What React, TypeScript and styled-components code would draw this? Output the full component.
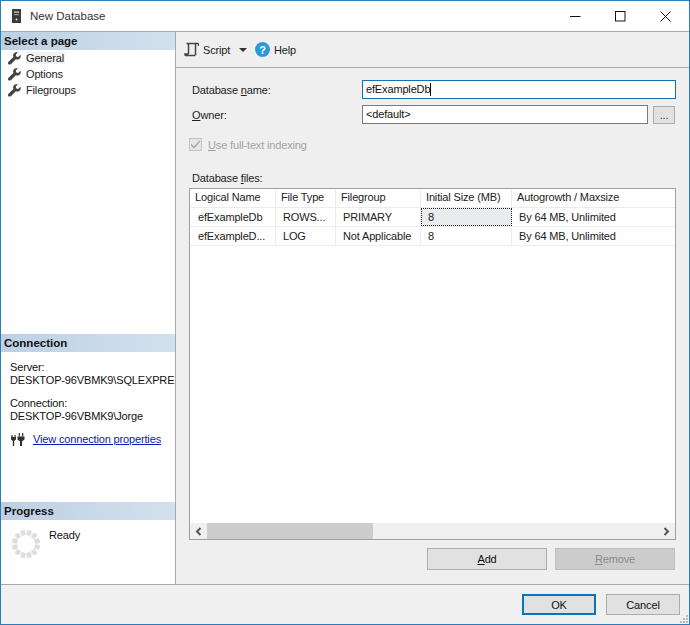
import React from "react";
import styled, { createGlobalStyle } from "styled-components";

const Global = createGlobalStyle`
  html, body { margin: 0; padding: 0; background: #fff; }
  body { font-family: "Liberation Sans", Arial, sans-serif; font-size: 11px; letter-spacing: -0.15px; color: #111; }
  * { box-sizing: border-box; }
  u { text-underline-offset: 1px; }
  button { letter-spacing: inherit; }
`;

const Win = styled.div`
  width: 690px; height: 625px; display: flex; flex-direction: column;
  border: 1px solid #2b7cba; background: #fff; overflow: hidden;
`;
const TitleBar = styled.div`
  height: 31px; flex: none; display: flex; align-items: center; padding: 0 1px 0 11px; background: #fff;
  border-bottom: 1px solid #a9a9a9;
`;
const TitleText = styled.span`
  margin-left: 9px; font-size: 11.5px; letter-spacing: 0; color: #333; flex: 1;
`;
const WinBtn = styled.button`
  width: 45px; height: 30px; padding: 0; border: 0; background: none; display: flex; align-items: center; justify-content: center;
`;
const Main = styled.div`
  flex: 1; display: flex; min-height: 0;
`;
const Side = styled.div`
  width: 175px; flex: none; display: flex; flex-direction: column; background: #fff; border-right: 1px solid #a9a9a9;
`;
const SideSection = styled.section<{ $h: number }>`
  height: ${p => p.$h}px; flex: none; display: flex; flex-direction: column;
`;
const SideHeader = styled.div`
  height: 18px; flex: none; padding-left: 3px; font-weight: bold; font-size: 11.5px; letter-spacing: 0; line-height: 18px; color: #111;
  background: linear-gradient(90deg, #bdd0e2 0%, #d3e1ee 100%);
`;
const PageList = styled.div`
  display: flex; flex-direction: column;
`;
const PageRow = styled.div`
  height: 16px; display: flex; align-items: center; padding-left: 7px; gap: 5px; color: #222;
`;
const PageLabel = styled.span<{ $active?: boolean }>`
  padding-right: 1px; background: ${p => (p.$active ? "#f2f2f2" : "transparent")};
`;
const ConnBody = styled.div`
  padding: 9px 0 0 9px; display: flex; flex-direction: column; line-height: 13px; color: #111; white-space: nowrap; overflow: hidden;
`;
const ConnGroup = styled.div`
  margin-bottom: 10px;
  & > div { height: 13px; }
`;
const LinkRow = styled.div`
  display: flex; align-items: center; gap: 8px; padding-left: 1px;
`;
const Link = styled.a`
  color: #0a18b4; text-decoration: underline;
`;
const ProgressBody = styled.div`
  display: flex; padding: 9px 0 0 10px; gap: 8px;
`;
const SpinnerIcon = styled.svg`
  flex: none;
`;
const Ready = styled.span`
  color: #111;
`;
const Content = styled.div`
  flex: 1; min-width: 0; display: flex; flex-direction: column; background: #efefef;
`;
const ToolBar = styled.div`
  height: 36px; flex: none; display: flex; align-items: center; padding-left: 8px; border-bottom: 1px solid #a9a9a9; color: #222;
`;
const ToolLabel = styled.span`
  margin-left: 4px;
`;
const ScriptLabel = styled.span`
  margin-left: 4px; width: 28px;
`;
const Caret = styled.span`
  width: 0; height: 0; margin: 0 8px; border-left: 4px solid transparent; border-right: 4px solid transparent; border-top: 4px solid #333;
`;
const Form = styled.div`
  flex: 1; display: flex; flex-direction: column; padding: 12px 0 0 13px; min-height: 0;
`;
const FieldRow = styled.div`
  display: flex; align-items: center; height: 19px; margin-bottom: 6px;
`;
const FieldLabel = styled.label`
  width: 173px; padding-left: 3px; flex: none; color: #222;
`;
const TextInput = styled.div<{ $focus?: boolean; $w: number }>`
  width: ${p => p.$w}px; height: 19px; background: #fff; border: 1px solid ${p => (p.$focus ? "#1472b4" : "#7a7a7a")};
  padding-left: 3px; line-height: 17px; color: #111; display: flex; align-items: center;
`;
const Cursor = styled.span`
  width: 1px; height: 13px; background: #111;
`;
const DotsBtn = styled.button`
  width: 22px; height: 18px; margin-left: 5px; padding: 0; background: #e1e1e1; border: 1px solid #adadad; font-size: 11px; line-height: 14px; color: #333; font-family: inherit;
`;
const CheckRow = styled.div`
  display: flex; align-items: center; margin-top: 8px; color: #a2a2a2; gap: 6px;
`;
const CheckBox = styled.span`
  width: 13px; height: 13px; border: 1px solid #c4c4c4; background: #e6e6e6; display: flex; align-items: center; justify-content: center;
`;
const FilesLabel = styled.div`
  margin-top: 20px; padding-left: 3px; height: 14px; line-height: 14px; color: #222;
`;
const Grid = styled.div`
  width: 487px; height: 352px; margin-top: 3px; flex: none; background: #fff; border: 1px solid #a0a0a0; display: flex; flex-direction: column;
`;
const GridRows = styled.div`
  flex: 1;
`;
const GridRow = styled.div`
  display: grid; grid-template-columns: 86px 60px 85px 91px 1fr; height: 19px; border-bottom: 1px solid #ececec;
`;
const HeadCell = styled.div`
  padding-left: 5px; line-height: 17px; color: #222; border-right: 1px solid #ececec; white-space: nowrap; overflow: hidden;
  &:last-child { border-right: 0; }
`;
const Cell = styled.div<{ $sel?: boolean }>`
  padding-left: 7px; line-height: 18px; color: #222; border-right: 1px solid #ececec; white-space: nowrap; overflow: hidden;
  background: ${p => (p.$sel ? "#e9ebee" : "transparent")};
  outline: ${p => (p.$sel ? "1px dotted #222" : "none")};
  outline-offset: -1px;
  &:first-child { padding-left: 8px; }
  &:last-child { border-right: 0; }
`;
const ScrollBar = styled.div`
  height: 16px; flex: none; display: flex; align-items: center; background: #f0f0f0;
`;
const ScrollArrow = styled.div`
  width: 17px; height: 16px; flex: none; display: flex; align-items: center; justify-content: center;
`;
const ScrollTrack = styled.div`
  flex: 1; height: 16px;
`;
const ScrollThumb = styled.div`
  width: 166px; height: 16px; background: #cdcdcd;
`;
const ActionRow = styled.div`
  display: flex; justify-content: flex-end; gap: 8px; margin-top: 8px; padding-right: 14px;
`;
const ActionBtn = styled.button<{ $disabled?: boolean }>`
  width: 120px; height: 22px; padding: 0; font-family: inherit; font-size: 11px;
  background: ${p => (p.$disabled ? "#cccccc" : "#e1e1e1")};
  border: 1px solid ${p => (p.$disabled ? "#bfbfbf" : "#adadad")};
  color: ${p => (p.$disabled ? "#8a8a8a" : "#111")};
`;
const Footer = styled.div`
  height: 40px; flex: none; background: #f0f0f0; border-top: 1px solid #a9a9a9; display: flex; justify-content: flex-end; gap: 10px; padding: 9px 9px 0 0; position: relative;
`;
const FootBtn = styled.button<{ $primary?: boolean }>`
  width: 74px; height: 21px; padding: 0; font-family: inherit; font-size: 11px; color: #111; background: #e1e1e1;
  border: ${p => (p.$primary ? "2px solid #0f73b8" : "1px solid #adadad")};
`;
const Grip = styled.svg`
  position: absolute; right: 1px; bottom: 1px;
`;

const Wrench = () => (
  <svg width="13" height="13" viewBox="0 0 12 12" style={{ flex: "none" }}>
    <path d="M11.6 2.6 9.4 4.6 7.6 4.2 7.2 2.4 9.2.4C7.6-.2 5.7.4 5 1.9c-.4.9-.4 1.8 0 2.6L.5 9c-.7.7-.7 1.6-.1 2.2s1.6.6 2.2 0L7.3 6.8c.9.4 1.8.4 2.6 0 1.5-.7 2.2-2.6 1.7-4.2Z" fill="#444" />
  </svg>
);

const Spinner = () => (
  <SpinnerIcon width="30" height="30" viewBox="0 0 30 30">
    {Array.from({ length: 12 }).map((_, i) => (
      <rect key={i} x="12.6" y="0.8" width="4.8" height="5.4" rx="1.3" fill="#dedede" transform={`rotate(${i * 30 + 15} 15 15)`} />
    ))}
  </SpinnerIcon>
);

const App = () => (
  <>
    <Global />
    <Win>
      <TitleBar>
        <svg width="9" height="14" viewBox="0 0 9 14">
          <rect width="9" height="14" fill="#3a3a3a" />
          <rect x="2" y="2.5" width="5" height="1.2" fill="#ddd" />
          <rect x="2" y="5" width="5" height="1.2" fill="#999" />
          <circle cx="4.5" cy="10.5" r="1" fill="#ddd" />
        </svg>
        <TitleText>New Database</TitleText>
        <WinBtn aria-label="Minimize">
          <svg width="11" height="11" viewBox="0 0 11 11"><path d="M0 5.5h10.5" stroke="#111" /></svg>
        </WinBtn>
        <WinBtn aria-label="Maximize">
          <svg width="11" height="11" viewBox="0 0 11 11"><rect x=".5" y=".5" width="9.5" height="9.5" fill="none" stroke="#111" /></svg>
        </WinBtn>
        <WinBtn aria-label="Close">
          <svg width="11" height="11" viewBox="0 0 11 11"><path d="M.5.5l10 10M10.5.5l-10 10" stroke="#111" /></svg>
        </WinBtn>
      </TitleBar>
      <Main>
        <Side>
          <SideSection $h={302}>
            <SideHeader>Select a page</SideHeader>
            <PageList>
              <PageRow><Wrench /><PageLabel $active>General</PageLabel></PageRow>
              <PageRow><Wrench /><PageLabel>Options</PageLabel></PageRow>
              <PageRow><Wrench /><PageLabel>Filegroups</PageLabel></PageRow>
            </PageList>
          </SideSection>
          <SideSection $h={168}>
            <SideHeader>Connection</SideHeader>
            <ConnBody>
              <ConnGroup>
                <div>Server:</div>
                <div>DESKTOP-96VBMK9\SQLEXPRE</div>
              </ConnGroup>
              <ConnGroup>
                <div>Connection:</div>
                <div>DESKTOP-96VBMK9\Jorge</div>
              </ConnGroup>
              <LinkRow>
                <svg width="14" height="13" viewBox="0 0 14 13">
                  <path d="M0 4h5v2.5L3.2 8v5H1.8V8L0 6.5Z" fill="#333" />
                  <path d="M6.5 3.5h7v3L11 8.5V13H9V8.5L6.5 6.5Z" fill="#333" />
                  <path d="M1 2v2M4 2v2M8.3 0v3.5M11.7 0v3.5" stroke="#333" strokeWidth="1.2" />
                </svg>
                <Link href="#">View connection properties</Link>
              </LinkRow>
            </ConnBody>
          </SideSection>
          <SideSection $h={82}>
            <SideHeader>Progress</SideHeader>
            <ProgressBody>
              <Spinner />
              <Ready>Ready</Ready>
            </ProgressBody>
          </SideSection>
        </Side>
        <Content>
          <ToolBar>
            <svg width="15" height="15" viewBox="0 0 15 15">
              <path d="M2.5 1.5h12M14.5 1.5v2.5M4.5 1.5v10.5M11.5 1.5v11.5M1 13.5h10.5M1 13.5v-1.5h3.5" fill="none" stroke="#444" strokeWidth="1.5" />
            </svg>
            <ScriptLabel>Script</ScriptLabel>
            <Caret />
            <svg width="15" height="15" viewBox="0 0 15 15">
              <circle cx="7.5" cy="7.5" r="7.5" fill="#2d9ad8" />
              <text x="7.5" y="11.5" textAnchor="middle" fontSize="11" fontWeight="bold" fill="#fff" fontFamily="Liberation Sans">?</text>
            </svg>
            <ToolLabel>Help</ToolLabel>
          </ToolBar>
          <Form>
            <FieldRow>
              <FieldLabel>Database <u>n</u>ame:</FieldLabel>
              <TextInput $focus $w={314}>efExampleDb<Cursor /></TextInput>
            </FieldRow>
            <FieldRow>
              <FieldLabel><u>O</u>wner:</FieldLabel>
              <TextInput $w={286}>&lt;default&gt;</TextInput>
              <DotsBtn>...</DotsBtn>
            </FieldRow>
            <CheckRow>
              <CheckBox>
                <svg width="11" height="9" viewBox="0 0 11 9"><path d="M1 4.5l3 3L10 1" fill="none" stroke="#a8a8a8" strokeWidth="1.3" /></svg>
              </CheckBox>
              <span><u>U</u>se full-text indexing</span>
            </CheckRow>
            <FilesLabel>Database <u>f</u>iles:</FilesLabel>
            <Grid>
              <GridRows>
                <GridRow>
                  <HeadCell>Logical Name</HeadCell>
                  <HeadCell>File Type</HeadCell>
                  <HeadCell>Filegroup</HeadCell>
                  <HeadCell>Initial Size (MB)</HeadCell>
                  <HeadCell>Autogrowth / Maxsize</HeadCell>
                </GridRow>
                <GridRow>
                  <Cell>efExampleDb</Cell>
                  <Cell>ROWS...</Cell>
                  <Cell>PRIMARY</Cell>
                  <Cell $sel>8</Cell>
                  <Cell>By 64 MB, Unlimited</Cell>
                </GridRow>
                <GridRow>
                  <Cell>efExampleD...</Cell>
                  <Cell>LOG</Cell>
                  <Cell>Not Applicable</Cell>
                  <Cell>8</Cell>
                  <Cell>By 64 MB, Unlimited</Cell>
                </GridRow>
              </GridRows>
              <ScrollBar>
                <ScrollArrow>
                  <svg width="7" height="9" viewBox="0 0 7 9"><path d="M5.5 1 2 4.5 5.5 8" fill="none" stroke="#555" strokeWidth="2" /></svg>
                </ScrollArrow>
                <ScrollTrack><ScrollThumb /></ScrollTrack>
                <ScrollArrow>
                  <svg width="7" height="9" viewBox="0 0 7 9"><path d="M1.5 1 5 4.5 1.5 8" fill="none" stroke="#555" strokeWidth="2" /></svg>
                </ScrollArrow>
              </ScrollBar>
            </Grid>
            <ActionRow>
              <ActionBtn><u>A</u>dd</ActionBtn>
              <ActionBtn $disabled><u>R</u>emove</ActionBtn>
            </ActionRow>
          </Form>
        </Content>
      </Main>
      <Footer>
        <FootBtn $primary>OK</FootBtn>
        <FootBtn>Cancel</FootBtn>
        <Grip width="8" height="8" viewBox="0 0 8 8">
          <path d="M6 0h2v2H6zM3 3h2v2H3zM6 3h2v2H6zM0 6h2v2H0zM3 6h2v2H3zM6 6h2v2H6z" fill="#bdbdbd" />
        </Grip>
      </Footer>
    </Win>
  </>
);

export default App;
